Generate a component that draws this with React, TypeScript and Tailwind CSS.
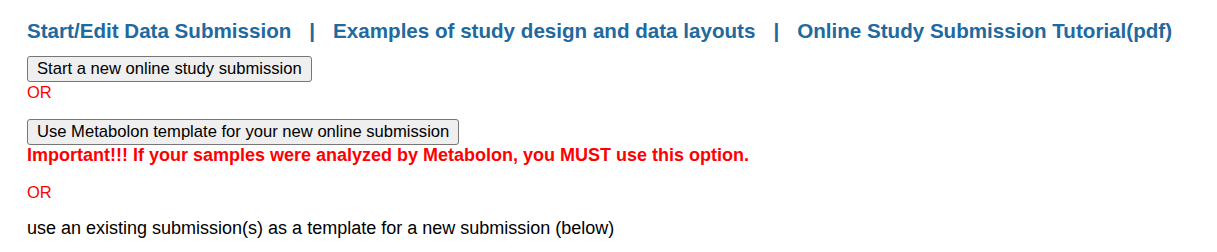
const linkCls = "text-[#21699e] no-underline hover:underline";
const btnCls =
  "h-[26px] rounded-[3px] border border-[#767676] bg-[#efefef] px-[9px] text-[16.6px] leading-[18px] text-black";

export default function App() {
  return (
    <div className="min-h-screen bg-white pl-[27px] pt-[19px] font-['Liberation_Sans',Arial,sans-serif] text-[16.5px] text-black">
      {/* Navigation links */}
      <div className="flex items-center text-[20.6px] font-bold leading-[24px] text-[#21699e]">
        <a href="#" className={linkCls}>Start/Edit Data Submission</a>
        <span className="mx-[18px]">|</span>
        <a href="#" className={linkCls}>Examples of study design and data layouts</a>
        <span className="mx-[18px]">|</span>
        <a href="#" className={linkCls}>Online Study Submission Tutorial(pdf)</a>
      </div>

      <div className="mt-[13px]">
        <button className={btnCls}>Start a new online study submission</button>
        <div className="mt-[1px] leading-[18px] text-[#ff0000]">OR</div>
      </div>

      <div className="mt-[18px]">
        <button className={btnCls}>Use Metabolon template for your new online submission</button>
        <div className="text-[18px] font-bold leading-[20px] text-[#ff0000]">
          Important!!! If your samples were analyzed by Metabolon, you MUST use this option.
        </div>
      </div>

      <div className="mt-[18px] leading-[18px] text-[#ff0000]">OR</div>

      <p className="mt-[17px] text-[18px] leading-[20px]">
        use an existing submission(s) as a template for a new submission (below)
      </p>
    </div>
  );
}
